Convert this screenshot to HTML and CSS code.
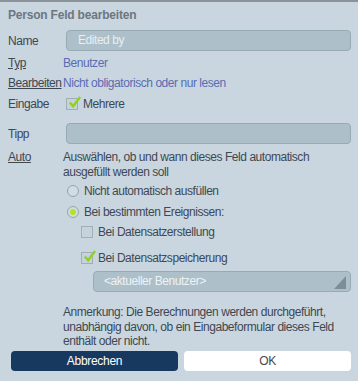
FILE: index.html
```html
<!DOCTYPE html>
<html lang="de">
<head>
    <meta charset="UTF-8">
    <title>Person Feld bearbeiten</title>
    <link rel="stylesheet" href="styles.css">
</head>
<body>
    <div class="dialog">
        <h1 class="title">Person Feld bearbeiten</h1>

        <div class="row row-name">
            <span class="label">Name</span>
            <div class="field">Edited by</div>
        </div>
        <div class="row row-typ">
            <span class="label link">Typ</span>
            <span class="value blue">Benutzer</span>
        </div>
        <div class="row">
            <span class="label link">Bearbeiten</span>
            <span class="value blue">Nicht obligatorisch oder nur lesen</span>
        </div>
        <div class="row row-eingabe">
            <span class="label">Eingabe</span>
            <span class="value check-line">
                <span class="box checked"><svg viewBox="0 0 14 14"><path d="M2 7 L5.5 11 L13 1" fill="none" stroke="#8fd321" stroke-width="2.6"/></svg></span>
                Mehrere
            </span>
        </div>
        <div class="row row-tipp">
            <span class="label">Tipp</span>
            <div class="field"></div>
        </div>
        <div class="row auto">
            <span class="label link">Auto</span>
            <span class="value">Auswählen, ob und wann dieses Feld automatisch<br>ausgefüllt werden soll</span>
        </div>

        <div class="options">
            <div class="opt">
                <span class="radio"></span>
                Nicht automatisch ausfüllen
            </div>
            <div class="opt">
                <span class="radio on"></span>
                Bei bestimmten Ereignissen:
            </div>
            <div class="opt sub">
                <span class="box"></span>
                Bei Datensatzerstellung
            </div>
            <div class="opt sub second">
                <span class="box checked"><svg viewBox="0 0 14 14"><path d="M2 7 L5.5 11 L13 1" fill="none" stroke="#8fd321" stroke-width="2.6"/></svg></span>
                Bei Datensatzspeicherung
            </div>
            <div class="select">
                &lt;aktueller Benutzer&gt;
                <span class="arrow"></span>
            </div>
        </div>
        <p class="note">Anmerkung: Die Berechnungen werden durchgeführt,<br>unabhängig davon, ob ein Eingabeformular dieses Feld<br>enthält oder nicht.</p>

        <div class="buttons">
            <button class="btn cancel">Abbrechen</button>
            <button class="btn ok">OK</button>
        </div>
    </div>
</body>
</html>
```

FILE: styles.css
```css
body {
    margin: 0;
    background-color: #c9d6e0;
    font-family: "Liberation Sans", Arial, sans-serif;
    font-size: 12px;
    letter-spacing: -0.45px;
    color: #3e4852;
}
.dialog {
    border-top: 2px solid #8b9298;
    height: 381px;
    padding: 0 7px 0 8px;
    box-sizing: border-box;
}
.title {
    margin: 0;
    padding-top: 6px;
    height: 18px;
    line-height: 14px;
    font-size: 12px;
    font-weight: bold;
    color: #6d7680;
    letter-spacing: -0.2px;
}
.row {
    display: flex;
    align-items: center;
    height: 20px;
}
.label {
    width: 55px;
    flex-shrink: 0;
}
.link {
    text-decoration: underline;
}
.blue {
    color: #5a6cb2;
}
.row-name {
    height: 21px;
    margin-top: 4px;
}
.row-typ {
    margin-top: 2px;
}
.row-eingabe {
    margin-top: 1px;
}
.row-tipp {
    height: 21px;
    margin-top: 9px;
}
.field {
    flex: 1;
    margin-left: 3px;
    height: 19px;
    line-height: 19px;
    padding-left: 11px;
    background-color: #adc0c9;
    border: 1px solid #98aab3;
    border-radius: 4px;
    color: #e8eef2;
}
.check-line {
    display: flex;
    align-items: center;
    margin-left: 3px;
}
.box {
    display: inline-block;
    width: 10px;
    height: 10px;
    border: 1px solid #a2adb6;
    background-color: #c6d2dc;
    margin-right: 5px;
    position: relative;
}
.box svg {
    position: absolute;
    left: 1px;
    top: -3px;
    width: 13px;
    height: 13px;
}
.auto {
    align-items: flex-start;
    height: auto;
    margin-top: 6px;
    line-height: 15px;
}
.options {
    padding-left: 59px;
}
.opt {
    display: flex;
    align-items: center;
    height: 21px;
}
.radio {
    display: inline-block;
    width: 10px;
    height: 10px;
    border: 1px solid #98a2ab;
    border-radius: 50%;
    background-color: #d2dce4;
    margin-right: 5px;
    position: relative;
}
.radio.on::after {
    content: "";
    position: absolute;
    left: 2px;
    top: 2px;
    width: 6px;
    height: 6px;
    border-radius: 50%;
    background-color: #b4e51c;
}
.sub {
    padding-left: 14px;
    height: 20px;
}
.sub.second {
    margin-top: 6px;
}
.select {
    margin-left: 26px;
    margin-top: 3px;
    height: 19px;
    line-height: 19px;
    padding-left: 10px;
    background-color: #adc0c9;
    border: 1px solid #98aab3;
    border-radius: 4px;
    color: #edf2f5;
    position: relative;
}
.arrow {
    position: absolute;
    right: 4px;
    bottom: 2px;
    width: 0;
    height: 0;
    border-left: 12px solid transparent;
    border-bottom: 13px solid #7f8d96;
}
.note {
    margin: 13px 0 0 55px;
    line-height: 14.5px;
}
.buttons {
    display: flex;
    gap: 6px;
    margin-top: 2px;
    padding-left: 3px;
}
.btn {
    flex: 1;
    height: 20px;
    padding: 0;
    border: none;
    border-radius: 4px;
    font-family: "Liberation Sans", Arial, sans-serif;
    font-size: 12px;
    letter-spacing: -0.3px;
    cursor: pointer;
}
.cancel {
    background-color: #17395f;
    color: #ffffff;
}
.ok {
    background-color: #ffffff;
    color: #3e4852;
}
```
